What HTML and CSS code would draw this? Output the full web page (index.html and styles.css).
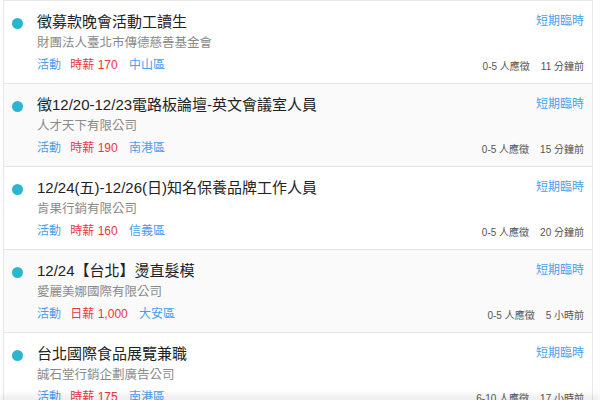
FILE: index.html
```html
<!DOCTYPE html>
<html lang="zh-Hant">
<head>
    <meta charset="UTF-8">
    <meta name="viewport" content="width=device-width, initial-scale=1.0">
    <title>短期臨時工作</title>
    <link rel="stylesheet" href="styles.css">
</head>
<body>
    <div class="job-list">
        <div class="job-item">
            <span class="dot"></span>
            <div class="job-info">
                <h3 class="job-title">徵募款晚會活動工讀生</h3>
                <p class="company">財團法人臺北市傳德慈善基金會</p>
                <div class="tags">
                    <span class="tag">活動</span>
                    <span class="tag pay">時薪 170</span>
                    <span class="tag">中山區</span>
                </div>
            </div>
            <div class="job-meta">
                <span class="job-type">短期臨時</span>
                <span class="stats">0-5 人應徵<span class="time">11 分鐘前</span></span>
            </div>
        </div>
        <div class="job-item">
            <span class="dot"></span>
            <div class="job-info">
                <h3 class="job-title">徵12/20-12/23電路板論壇-英文會議室人員</h3>
                <p class="company">人才天下有限公司</p>
                <div class="tags">
                    <span class="tag">活動</span>
                    <span class="tag pay">時薪 190</span>
                    <span class="tag">南港區</span>
                </div>
            </div>
            <div class="job-meta">
                <span class="job-type">短期臨時</span>
                <span class="stats">0-5 人應徵<span class="time">15 分鐘前</span></span>
            </div>
        </div>
        <div class="job-item">
            <span class="dot"></span>
            <div class="job-info">
                <h3 class="job-title">12/24(五)-12/26(日)知名保養品牌工作人員</h3>
                <p class="company">肯果行銷有限公司</p>
                <div class="tags">
                    <span class="tag">活動</span>
                    <span class="tag pay">時薪 160</span>
                    <span class="tag">信義區</span>
                </div>
            </div>
            <div class="job-meta">
                <span class="job-type">短期臨時</span>
                <span class="stats">0-5 人應徵<span class="time">20 分鐘前</span></span>
            </div>
        </div>
        <div class="job-item">
            <span class="dot"></span>
            <div class="job-info">
                <h3 class="job-title">12/24【台北】燙直髮模</h3>
                <p class="company">愛麗美娜國際有限公司</p>
                <div class="tags">
                    <span class="tag">活動</span>
                    <span class="tag pay">日薪 1,000</span>
                    <span class="tag">大安區</span>
                </div>
            </div>
            <div class="job-meta">
                <span class="job-type">短期臨時</span>
                <span class="stats">0-5 人應徵<span class="time">5 小時前</span></span>
            </div>
        </div>
        <div class="job-item">
            <span class="dot"></span>
            <div class="job-info">
                <h3 class="job-title">台北國際食品展覽兼職</h3>
                <p class="company">誠石堂行銷企劃廣告公司</p>
                <div class="tags">
                    <span class="tag">活動</span>
                    <span class="tag pay">時薪 175</span>
                    <span class="tag">南港區</span>
                </div>
            </div>
            <div class="job-meta">
                <span class="job-type">短期臨時</span>
                <span class="stats">6-10 人應徵<span class="time">17 小時前</span></span>
            </div>
        </div>
    </div>
    <div class="bottom-bar"></div>
</body>
</html>
```

FILE: styles.css
```css
* {
    box-sizing: border-box;
    margin: 0;
    padding: 0;
}

body {
    background-color: #ffffff;
    font-family: "Liberation Sans", "Noto Sans CJK TC", sans-serif;
    color: #333;
}

.job-list {
    width: 590px;
    margin-left: 3px;
    border: 1px solid #e8e8e8;
    border-bottom: none;
}

.job-item {
    display: flex;
    height: 83px;
    padding: 9px 8px 7px 8px;
    border-bottom: 1px solid #e6e6e6;
    background-color: #ffffff;
}

.job-item:nth-child(even) {
    background-color: #fafafa;
}

.dot {
    flex-shrink: 0;
    width: 11px;
    height: 11px;
    margin-top: 8px;
    margin-right: 14px;
    border-radius: 50%;
    background-color: #2bb6cf;
}

.job-info {
    flex: 1;
}

.job-title {
    font-size: 15px;
    font-weight: normal;
    line-height: 23px;
    color: #222;
}

.company {
    font-size: 12.5px;
    line-height: 21px;
    color: #8a8a8a;
}

.tags {
    font-size: 12px;
    line-height: 22px;
}

.tag {
    color: #4a9ef2;
    margin-right: 6px;
}

.tag.pay {
    color: #e8373d;
    margin-right: 8px;
}

.job-meta {
    display: flex;
    flex-direction: column;
    justify-content: space-between;
    align-items: flex-end;
}

.job-type {
    font-size: 12px;
    line-height: 23px;
    color: #4a9ef2;
}

.stats {
    font-size: 10px;
    line-height: 18px;
    color: #555;
}

.time {
    margin-left: 11px;
}

.bottom-bar {
    position: fixed;
    left: 0;
    right: 0;
    bottom: 0;
    height: 0;
    box-shadow: 0 0 8px 2px rgba(0, 0, 0, 0.18);
}
```
